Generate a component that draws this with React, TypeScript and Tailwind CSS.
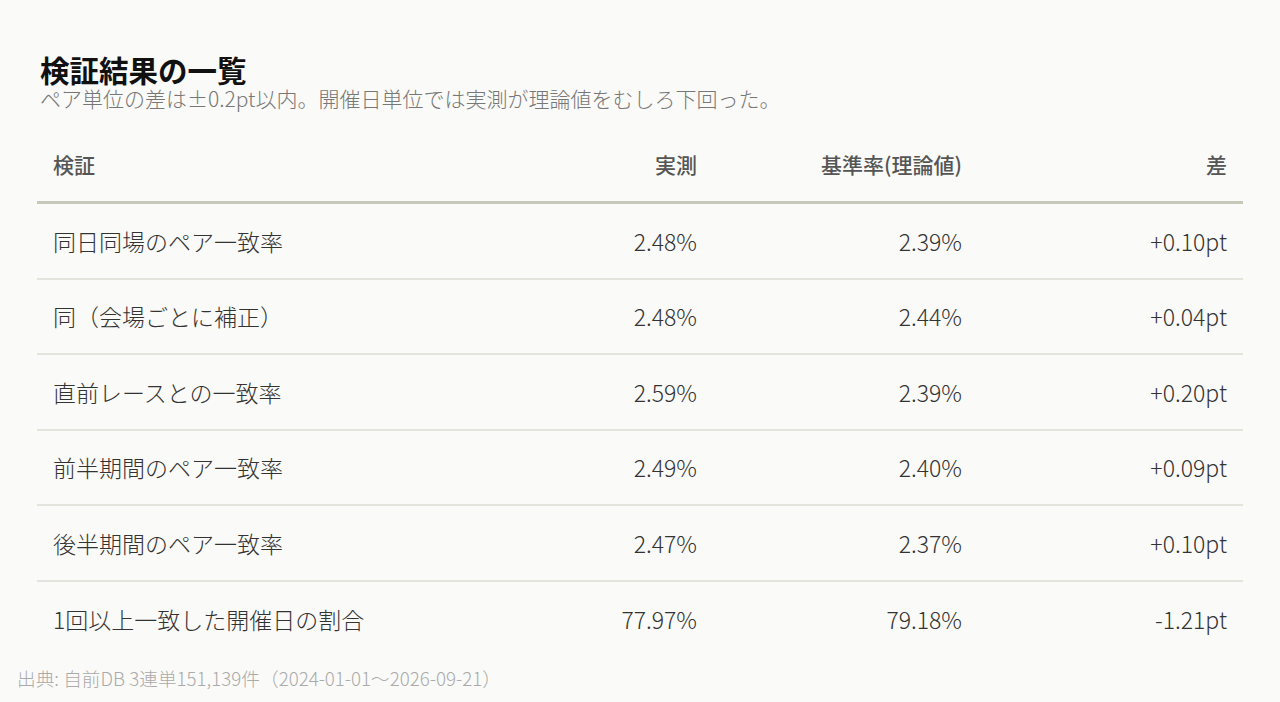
import React from "react";

const rows = [
  { label: "同日同場のペア一致率", actual: "2.48%", base: "2.39%", diff: "+0.10pt" },
  { label: "同（会場ごとに補正）", actual: "2.48%", base: "2.44%", diff: "+0.04pt" },
  { label: "直前レースとの一致率", actual: "2.59%", base: "2.39%", diff: "+0.20pt" },
  { label: "前半期間のペア一致率", actual: "2.49%", base: "2.40%", diff: "+0.09pt" },
  { label: "後半期間のペア一致率", actual: "2.47%", base: "2.37%", diff: "+0.10pt" },
  { label: "1回以上一致した開催日の割合", actual: "77.97%", base: "79.18%", diff: "-1.21pt" },
];

const font = { fontFamily: '"Noto Sans CJK JP", "Noto Sans", sans-serif' };

export default function App() {
  return (
    <div className="w-full h-[702px] bg-[#fafaf8] text-[#333] overflow-hidden pt-[53px]" style={font}>
      <div className="px-10">
        <h1 className="text-[29.5px] leading-[33px] font-bold text-[#111]">検証結果の一覧</h1>
        <p className="text-[21px] leading-[24px] font-light text-[#777]">
          ペア単位の差は±0.2pt以内。開催日単位では実測が理論値をむしろ下回った。
        </p>
      </div>

      <div className="mx-[37px] mt-[18px]">
        <div className="grid grid-cols-[1fr_265px_265px_265px] h-[76px] items-center border-b-[3px] border-[#c6c8ba] text-[21px] font-medium text-[#555]">
          <div className="px-4">検証</div>
          <div className="px-4 text-right">実測</div>
          <div className="px-4 text-right">基準率(理論値)</div>
          <div className="px-4 text-right">差</div>
        </div>
        {rows.map((r, i) => (
          <div
            key={r.label}
            className={`grid grid-cols-[1fr_265px_265px_265px] h-[75.5px] items-center text-[23px] font-light ${
              i < rows.length - 1 ? "border-b-2 border-[#e4e4dc]" : ""
            }`}
          >
            <div className="px-4">{r.label}</div>
            <div className="px-4 text-right">{r.actual}</div>
            <div className="px-4 text-right">{r.base}</div>
            <div className="px-4 text-right">{r.diff}</div>
          </div>
        ))}
      </div>

      <p className="mt-[8px] px-[17px] text-[18.7px] leading-[26px] font-light text-[#aaa]">
        出典: 自前DB 3連単151,139件（2024-01-01～2026-09-21）
      </p>
    </div>
  );
}
